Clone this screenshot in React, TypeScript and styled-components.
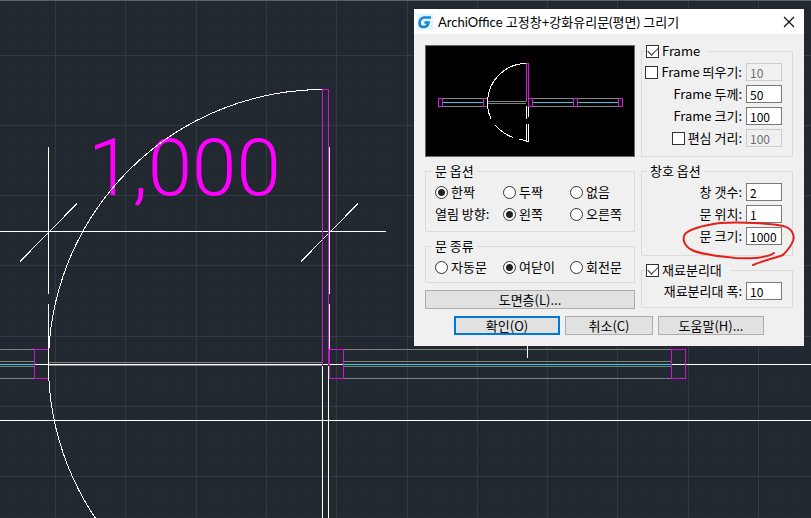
import React from "react";
import styled, { createGlobalStyle } from "styled-components";

const GlobalStyle = createGlobalStyle`
  * { box-sizing: border-box; }
  body { margin: 0; background: #21282f; }
`;

const uiFont = `"Noto Sans CJK KR", sans-serif`;

const Workspace = styled.main`
  position: relative;
  min-height: 100vh;
  overflow: hidden;
  background-color: #21282f;
  font: 13px/14px ${uiFont};
  color: #000;
`;

const Drawing = styled.svg`
  position: absolute;
  inset: 0;
  width: 100%;
  height: 100%;
`;

const DimensionText = styled.text`
  font: 300 80px Roboto, sans-serif;
  fill: #ff00ff;
`;

const Markup = styled(Drawing)`
  pointer-events: none;
`;

const Dialog = styled.section`
  position: absolute;
  left: 414px;
  top: 9px;
  width: 390px;
  background: #f0f0f0;
`;

const TitleBar = styled.header`
  display: flex;
  align-items: center;
  gap: 5px;
  height: 25px;
  padding: 0 8px 0 3px;
  background: #fff;
`;

const Title = styled.h1`
  flex: 1;
  margin: 0;
  font: 400 13px/16px Lato, "Noto Sans CJK KR", sans-serif;
  white-space: nowrap;
`;

const CloseButton = styled.button`
  display: flex;
  padding: 0;
  border: 0;
  background: none;
`;

const Body = styled.form`
  display: flex;
  flex-direction: column;
  gap: 7px;
  padding: 10px 11px 11px;
`;

const Columns = styled.div`
  display: grid;
  grid-template-columns: 210px 1fr;
  gap: 6px;
`;

const Column = styled.div`
  display: flex;
  flex-direction: column;
  gap: 7px;
  min-width: 0;
`;

const Preview = styled.svg`
  display: block;
  width: 100%;
  height: 112px;
  margin-top: 1px;
  background: #000;
`;

const Group = styled.fieldset<{ $bottom: number; $fields?: boolean }>`
  display: block;
  min-width: 0;
  margin: 0;
  padding: 5px 10px ${(p) => p.$bottom}px ${(p) => (p.$fields ? "3px" : "10px")};
  border: 1px solid #dcdcdc;
`;

const Legend = styled.legend<{ $kind: "radios" | "fields" | "check" }>`
  height: 14px;
  margin-left: ${(p) => ({ radios: "-4px", fields: "2px", check: "0" })[p.$kind]};
  padding: ${(p) => (p.$kind === "check" ? "0 8px 0 1px" : "0 3px")};
`;

const Rows = styled.div`
  display: flex;
  flex-direction: column;
  gap: 4px;
`;

const RadioRow = styled.div`
  display: grid;
  grid-template-columns: 68px 67px 1fr;
  align-items: center;
  height: 18px;
  margin-left: -1px;
  white-space: nowrap;
`;

const Choice = styled.label`
  display: flex;
  align-items: center;
  gap: 3px;
  white-space: nowrap;
`;

const Radio = styled.input`
  appearance: none;
  flex: none;
  width: 13px;
  height: 13px;
  margin: 0;
  border: 1px solid #333;
  border-radius: 50%;
  background: #fff;
  &:checked {
    background: radial-gradient(circle, #222 0 3px, #fff 4px);
  }
`;

const Check = styled.input`
  appearance: none;
  flex: none;
  display: grid;
  place-items: center;
  width: 13px;
  height: 13px;
  margin: 0;
  border: 1px solid #333;
  background: #fff;
  &:checked::before {
    content: "";
    width: 9px;
    height: 5px;
    margin-bottom: 3px;
    border: solid #333;
    border-width: 0 0 1px 1px;
    transform: rotate(-45deg);
  }
`;

const FieldRow = styled.div`
  display: flex;
  align-items: center;
  justify-content: flex-end;
  gap: 4px;
  height: 18px;
  white-space: nowrap;
`;

const NumberBox = styled.input`
  flex: none;
  width: 36px;
  height: 18px;
  padding: 0 3px;
  border: 1px solid #7a7a7a;
  border-radius: 0;
  background: #fff;
  color: #000;
  font: 12px/14px ${uiFont};
  &:disabled {
    border-color: #cccccc;
    background: #f0f0f0;
    color: #6d6d6d;
  }
`;

const PushButton = styled.button<{ $width?: number; $primary?: boolean }>`
  width: ${(p) => (p.$width ? `${p.$width}px` : "100%")};
  height: 19px;
  padding: 0;
  border: ${(p) => (p.$primary ? "2px solid #0078d7" : "1px solid #adadad")};
  background: #e1e1e1;
  color: #000;
  font: 13px/14px ${uiFont};
`;

const Footer = styled.footer`
  display: flex;
  justify-content: center;
  gap: 5px;
`;

function RadioChoice({ name, label, checked }: { name: string; label: string; checked?: boolean }) {
  return (
    <Choice>
      <Radio type="radio" name={name} defaultChecked={checked} />
      {label}
    </Choice>
  );
}

function Field({ id, label, value, toggle }: { id: string; label: string; value: string; toggle?: boolean }) {
  return (
    <FieldRow>
      {toggle ? (
        <Choice>
          <Check type="checkbox" />
          {label}
        </Choice>
      ) : (
        <label htmlFor={id}>{label}</label>
      )}
      <NumberBox id={id} aria-label={label} defaultValue={value} disabled={toggle} />
    </FieldRow>
  );
}

const verticals = [55, 125, 196, 266, 336, 407, 477, 547, 617, 688, 758];
const horizontals = [55, 125, 195, 265, 336, 406, 476];
const minors = Array.from({ length: 60 }, (_, i) => -1 + i * 14);

function PlanDrawing() {
  return (
    <Drawing shapeRendering="crispEdges" fill="none" aria-hidden="true">
      <g stroke="#242c33">
        {minors.map((x) => <line key={`x${x}`} x1={x + 0.5} x2={x + 0.5} y1="0" y2="100%" />)}
        {minors.map((y) => <line key={`y${y}`} y1={y + 0.5} y2={y + 0.5} x1="0" x2="100%" />)}
      </g>
      <g stroke="#323a42">
        {verticals.map((x) => <line key={`x${x}`} x1={x + 0.5} x2={x + 0.5} y1="0" y2="100%" />)}
        {horizontals.map((y) => <line key={`y${y}`} y1={y + 0.5} y2={y + 0.5} x1="0" x2="100%" />)}
      </g>
      <line x1="0" x2="100%" y1="0.5" y2="0.5" stroke="#59636a" />
      <DimensionText x="88" y="195">1,000</DimensionText>
      <g stroke="#808080">
        <path d="M0 349.5H34M0 361.5H34M0 366.5H34M0 378.5H34" />
        <path d="M343 349.5H671M343 361.5H671M343 366.5H671M343 378.5H671" />
        <path d="M48 362.5H322M48 365.5H322" />
      </g>
      <g stroke="#fff">
        <line x1="0" x2="100%" y1="364.5" y2="364.5" />
        <line x1="0" x2="100%" y1="420.5" y2="420.5" />
        <line x1="322.5" x2="322.5" y1="366" y2="100%" />
        <line x1="328.5" x2="328.5" y1="366" y2="100%" />
        <path d="M0 231.5H386M48.5 147V294M48.5 304V378M329.5 147V294M329.5 304V349" />
        <path d="M20 261.5L77 203.5M301 261.5L358 203.5M527.5 346V358" />
        <path d="M323 89.5A275 275 0 0 0 48.5 364.5A275 275 0 0 0 323 639.5" />
      </g>
      <path stroke="#35d5de" d="M0 364.5H34M343 364.5H671" />
      <path stroke="#d012d4" d="M322.5 365V89.5H328.5V365M48 349.5H34.5V378.5H48M329.5 349.5H343.5V378.5H329.5ZM671.5 349.5H685.5V378.5H671.5Z" />
    </Drawing>
  );
}

function DoorPreview() {
  return (
    <Preview viewBox="0 0 210 112" preserveAspectRatio="none" shapeRendering="crispEdges" fill="none" role="img" aria-label="평면">
      <path stroke="#7d8580" d="M17 53.5H59M17 61.5H59M107 53.5H194M107 61.5H194M63 56.5H101M63 58.5H101" />
      <path stroke="#35c9de" d="M18 57.5H58M108 57.5H148M153 57.5H193" />
      <path stroke="#fff" d="M101 18.5A39 39 0 0 0 62.5 57.5Q62.5 67 66 73.5M70 80Q78 89 88 92.5M94 94.5L101 95.5M101.5 61V74M103.5 61V72M101.5 79V96.5H103.5V79" />
      <path stroke="#d31bd6" d="M101.5 57V18.5H103.5V57M13.5 53.5H17.5V61.5H13.5ZM62 53.5H58.5V61.5H62M103.5 53.5H107.5V61.5H103.5ZM148.5 53.5H152.5V61.5H148.5ZM193.5 53.5H197.5V61.5H193.5Z" />
      <rect x="0.5" y="0.5" width="209" height="111" stroke="#686868" />
    </Preview>
  );
}

function AppIcon() {
  return (
    <svg width="16" height="16" viewBox="0 0 16 16" fill="none" aria-hidden="true">
      <rect width="16" height="16" fill="#dff4fc" />
      <path d="M14 3.5H7.5C4.5 3.5 2.5 6 2.5 9S4 13 6.5 13S11 11.5 11.5 8.5H7.5" stroke="#1787d2" strokeWidth="2.6" />
    </svg>
  );
}

export default function App() {
  return (
    <Workspace>
      <GlobalStyle />
      <PlanDrawing />
      <Dialog role="dialog" aria-labelledby="dialog-title">
        <TitleBar>
          <AppIcon />
          <Title id="dialog-title">ArchiOffice 고정창+강화유리문(평면) 그리기</Title>
          <CloseButton type="button" aria-label="닫기">
            <svg width="14" height="14" viewBox="0 0 14 14" aria-hidden="true">
              <path d="M2 2L12 12M12 2L2 12" stroke="#111" strokeWidth="1.2" />
            </svg>
          </CloseButton>
        </TitleBar>
        <Body onSubmit={(e) => e.preventDefault()}>
          <Columns>
            <Column>
              <DoorPreview />
              <Group $bottom={8}>
                <Legend $kind="radios">문 옵션</Legend>
                <Rows>
                  <RadioRow>
                    <RadioChoice name="leaf" label="한짝" checked />
                    <RadioChoice name="leaf" label="두짝" />
                    <RadioChoice name="leaf" label="없음" />
                  </RadioRow>
                  <RadioRow>
                    <span>열림 방향:</span>
                    <RadioChoice name="side" label="왼쪽" checked />
                    <RadioChoice name="side" label="오른쪽" />
                  </RadioRow>
                </Rows>
              </Group>
              <Group $bottom={6}>
                <Legend $kind="radios">문 종류</Legend>
                <RadioRow>
                  <RadioChoice name="kind" label="자동문" />
                  <RadioChoice name="kind" label="여닫이" checked />
                  <RadioChoice name="kind" label="회전문" />
                </RadioRow>
              </Group>
              <PushButton type="button">도면층(L)...</PushButton>
            </Column>
            <Column>
              <Group $bottom={9} $fields>
                <Legend $kind="check">
                  <Choice>
                    <Check type="checkbox" defaultChecked />
                    Frame
                  </Choice>
                </Legend>
                <Rows>
                  <Field id="offset" label="Frame 띄우기:" value="10" toggle />
                  <Field id="thickness" label="Frame 두께:" value="50" />
                  <Field id="size" label="Frame 크기:" value="100" />
                  <Field id="eccentric" label="편심 거리:" value="100" toggle />
                </Rows>
              </Group>
              <Group $bottom={10} $fields>
                <Legend $kind="fields">창호 옵션</Legend>
                <Rows>
                  <Field id="windows" label="창 갯수:" value="2" />
                  <Field id="door-place" label="문 위치:" value="1" />
                  <Field id="door-size" label="문 크기:" value="1000" />
                </Rows>
              </Group>
              <Group $bottom={7} $fields>
                <Legend $kind="check">
                  <Choice>
                    <Check type="checkbox" defaultChecked />
                    재료분리대
                  </Choice>
                </Legend>
                <Field id="divider" label="재료분리대 폭:" value="10" />
              </Group>
            </Column>
          </Columns>
          <Footer>
            <PushButton type="submit" $width={106} $primary>확인(O)</PushButton>
            <PushButton type="button" $width={88}>취소(C)</PushButton>
            <PushButton type="button" $width={106}>도움말(H)...</PushButton>
          </Footer>
        </Body>
      </Dialog>
      <Markup fill="none" aria-hidden="true">
        <path
          d="M774 253C768 257 755 259 735 258C718 256 702 255 692 250C684 246 682 239 685 234C690 229 706 225 720 223C740 222 770 223 783 226C792 228 795 235 793 241C791 246 787 251 783 255C772 259 762 261 753 265"
          stroke="#e3201b"
          strokeWidth="2"
          strokeLinecap="round"
          strokeLinejoin="round"
        />
      </Markup>
    </Workspace>
  );
}
